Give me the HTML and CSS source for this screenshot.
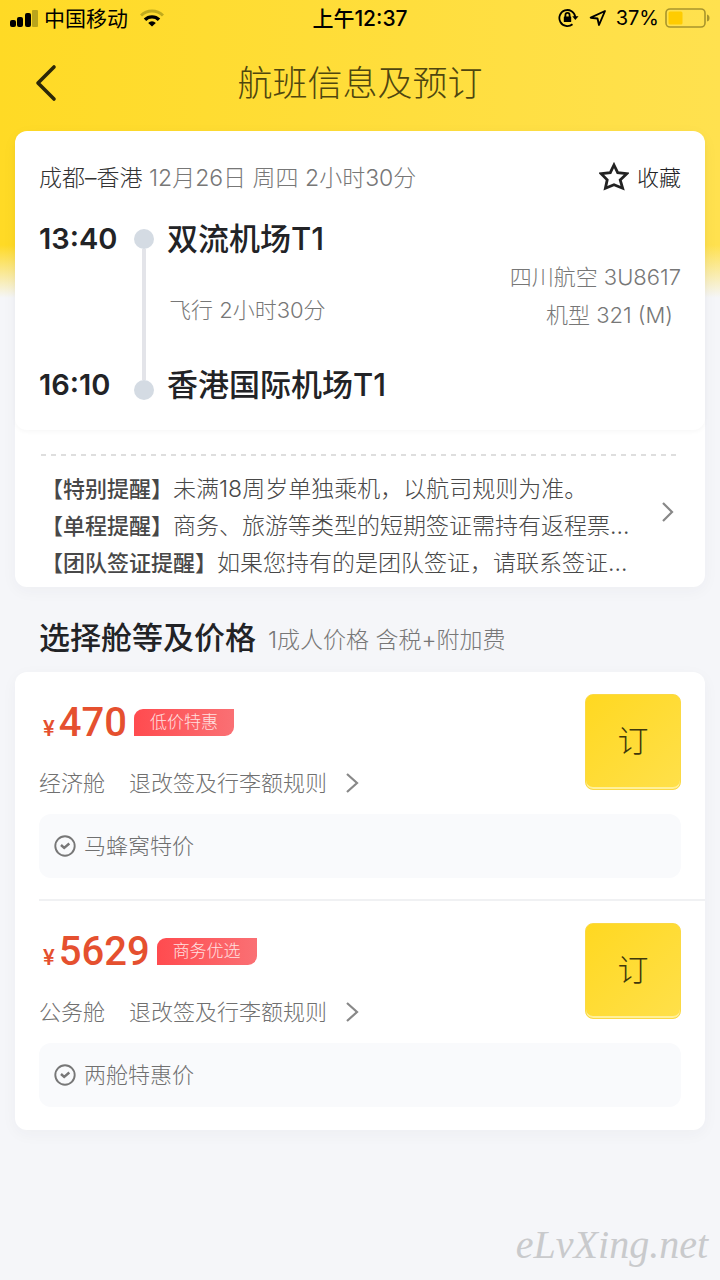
FILE: index.html
```html
<!DOCTYPE html>
<html lang="zh-CN">
<head>
<meta charset="utf-8">
<meta name="viewport" content="width=device-width, initial-scale=1">
<title>航班信息及预订</title>
<link rel="stylesheet" href="styles.css">
</head>
<body>
<div class="page">
  <div class="status">
    <div class="status-left">
      <svg class="signal" width="28" height="18" viewBox="0 0 28 18" aria-hidden="true"><rect x="0" y="11" width="6" height="7" rx="2"/><rect x="7" y="8" width="6" height="10" rx="2"/><rect x="15" y="4" width="6" height="14" rx="2"/><rect x="22" y="1" width="6" height="17" rx="1" fill="#b9a41c"/></svg>
      <span>中国移动</span>
      <svg class="wifi" width="24" height="18" viewBox="0 0 24 18" fill="none" stroke-width="3" aria-hidden="true"><path d="M1 6.500A15.500 15.500 0 0 1 23 6.500" stroke="#c1ab1d"/><path d="M5 10.800A9.800 9.800 0 0 1 19 10.800" stroke="#000" stroke-width="3.400"/><path d="M12 17.500L8.200 13.900A5.400 5.400 0 0 1 15.800 13.900Z" fill="#000"/></svg>
    </div>
    <div class="clock">上午12:37</div>
    <div class="status-right">
      <svg width="21" height="20" viewBox="0 0 21 20" fill="none" stroke="#000" stroke-width="1.800" aria-hidden="true"><path d="M14.500 16.200A8 8 0 1 1 17.300 9"/><path d="M14.300 8.200H20.500L17.300 12Z" fill="#000" stroke="none"/><rect x="5.800" y="8.500" width="7.400" height="5.600" rx=".6" fill="#000" stroke="none"/><path d="M7.400 9V7.200a2.100 2.300 0 0 1 4.200 0V9"/></svg>
      <svg class="locate" width="18" height="18" viewBox="0 0 18 18" fill="none" stroke="#000" stroke-width="1.900" stroke-linejoin="round" aria-hidden="true"><path d="M16 2L1.700 8.700L8.500 9.500L10 16Z"/></svg>
      <span>37%</span>
      <svg class="battery" width="45" height="20" viewBox="0 0 45 20" aria-hidden="true"><rect x="1" y="1" width="39" height="18" rx="4" fill="none" stroke="#a8942c" stroke-width="1.600"/><rect x="3.500" y="3.500" width="14" height="13" rx="1.500" fill="#ffcc00"/><path d="M42 6.500Q44.500 7 44.500 10T42 13.500Z" fill="#a8942c"/></svg>
    </div>
  </div>

  <header class="nav">
    <button class="back" type="button" aria-label="返回"><svg width="22" height="38" viewBox="0 0 22 38" fill="none" stroke="#2b2708" stroke-width="3.600" stroke-linecap="round" stroke-linejoin="round"><path d="M19 3L3 19L19 35"/></svg></button>
    <h1>航班信息及预订</h1>
  </header>

  <main>
    <section class="card flight">
      <div class="trip">
        <div class="trip-head">
          <div class="route"><span class="cities">成都–香港</span> 12月26日 周四 2小时30分</div>
          <button class="favorite" type="button"><svg width="30" height="29" viewBox="0 0 30 29" fill="none" stroke="#222" stroke-width="2.800" stroke-linejoin="miter" aria-hidden="true"><path d="M15 3L18.700 10.700L27.800 11.700L21.200 17.900L23.600 26.200L15 22.700L6.400 26.200L8.200 17.900L2.200 11.700L11.300 10.700Z"/></svg>收藏</button>
        </div>
        <div class="itinerary">
          <div class="times"><time>13:40</time><time>16:10</time></div>
          <div class="rail"><i class="dot"></i><i class="track"></i><i class="dot"></i></div>
          <div class="stops"><strong>双流机场T1</strong><span class="duration">飞行 2小时30分</span><strong>香港国际机场T1</strong></div>
          <div class="plane"><span>四川航空 3U8617</span><span class="model">机型 321 (M)</span></div>
        </div>
      </div>
      <a class="notices" href="#notices">
        <div class="notice-list">
          <p><b>【特别提醒】</b>未满18周岁单独乘机，以航司规则为准。</p>
          <p><b>【单程提醒】</b>商务、旅游等类型的短期签证需持有返程票…</p>
          <p><b>【团队签证提醒】</b>如果您持有的是团队签证，请联系签证…</p>
        </div>
        <svg width="14" height="20" viewBox="0 0 14 20" fill="none" stroke="#888" stroke-width="2.200" aria-hidden="true"><path d="M2 1L11 10L2 19"/></svg>
      </a>
    </section>

    <div class="section-title"><h2>选择舱等及价格</h2><span>1成人价格 含税+附加费</span></div>

    <section class="card">
      <article class="fare">
        <div class="fare-head">
          <div class="fare-info">
            <div class="price-row"><span class="price"><small>¥</small>470</span><span class="tag">低价特惠</span></div>
            <div class="rules"><span>经济舱</span><a href="#rules"><span>退改签及行李额规则</span><svg width="14" height="22" viewBox="0 0 14 22" fill="none" stroke="#888" stroke-width="2.200" aria-hidden="true"><path d="M2 2L12 11L2 20"/></svg></a></div>
          </div>
          <button class="book" type="button">订</button>
        </div>
        <div class="perk"><svg width="22" height="22" viewBox="0 0 22 22" fill="none" stroke="#777" stroke-width="1.900" aria-hidden="true"><circle cx="11" cy="11" r="9.700"/><path d="M7 10L10.200 13L15.300 8.500" stroke-width="2.400"/></svg><span>马蜂窝特价</span></div>
      </article>
      <article class="fare">
        <div class="fare-head">
          <div class="fare-info">
            <div class="price-row"><span class="price"><small>¥</small>5629</span><span class="tag">商务优选</span></div>
            <div class="rules"><span>公务舱</span><a href="#rules"><span>退改签及行李额规则</span><svg width="14" height="22" viewBox="0 0 14 22" fill="none" stroke="#888" stroke-width="2.200" aria-hidden="true"><path d="M2 2L12 11L2 20"/></svg></a></div>
          </div>
          <button class="book" type="button">订</button>
        </div>
        <div class="perk"><svg width="22" height="22" viewBox="0 0 22 22" fill="none" stroke="#777" stroke-width="1.900" aria-hidden="true"><circle cx="11" cy="11" r="9.700"/><path d="M7 10L10.200 13L15.300 8.500" stroke-width="2.400"/></svg><span>两舱特惠价</span></div>
      </article>
    </section>
  </main>
  <div class="watermark">eLvXing.net</div>
</div>
</body>
</html>
```
FILE: styles.css
```css
* { box-sizing: border-box; }
body {
  margin: 0;
  background: #f5f6f9;
  color: #222326;
  font-family: Inter, "Noto Sans CJK SC", sans-serif;
  font-size: 22px;
  font-weight: 300;
}
h1, h2, p { margin: 0; }
svg { display: block; flex: none; }
button {
  border: 0;
  padding: 0;
  background: none;
  color: inherit;
  font: inherit;
  cursor: pointer;
}
a { color: inherit; text-decoration: none; }
.page {
  position: relative;
  min-height: 100vh;
  background:
    linear-gradient(to bottom, rgba(245, 246, 249, 0) 245px, #f5f6f9 298px),
    linear-gradient(to right, #ffda25, #ffe14f);
}

.status {
  display: grid;
  grid-template-columns: 1fr auto 1fr;
  align-items: center;
  height: 36px;
  padding: 0 10px;
  color: #000;
  font-size: 20px;
  font-weight: 400;
}
.status-left, .status-right { display: flex; align-items: center; }
.status-left span { padding-bottom: 2px; font-size: 21px; }
.signal { margin-right: 6px; }
.wifi { margin-left: 12px; }
.status-right { justify-content: flex-end; }
.locate { margin: 0 9px 0 10px; }
.battery { margin-left: 6px; }
.clock { padding-bottom: 2px; font-size: 21px; font-weight: 500; }

.nav {
  display: grid;
  grid-template-columns: 60px 1fr 60px;
  align-items: center;
  height: 95px;
  padding-bottom: 2px;
}
.back { padding-left: 35px; }
.nav h1 {
  padding-bottom: 4px;
  color: #4f460f;
  font-size: 35px;
  font-weight: 300;
  text-align: center;
}

.card {
  margin: 0 15px;
  border-radius: 12px;
  background: #fff;
  box-shadow: 0 4px 16px rgba(40, 50, 80, 0.04);
}
.trip {
  height: 299px;
  padding: 24px 24px 0;
  border-radius: 12px;
  box-shadow: 0 2px 4px rgba(0, 0, 0, 0.03);
}
.trip-head {
  display: flex;
  justify-content: space-between;
  align-items: center;
  height: 44px;
  padding-bottom: 2px;
}
.route { color: #777; font-size: 23px; white-space: nowrap; }
.cities { color: #333; }
.favorite { display: flex; align-items: center; gap: 8px; }
.itinerary { display: flex; height: 206px; padding-top: 20px; }
.times {
  display: flex;
  flex-direction: column;
  justify-content: space-between;
  width: 95px;
  height: 186px;
}
.times time { font-size: 29px; font-weight: 600; line-height: 40px; }
.rail {
  display: flex;
  flex-direction: column;
  align-items: center;
  width: 20px;
  height: 181px;
  padding-top: 10px;
}
.dot { width: 20px; height: 20px; border-radius: 50%; background: #d4dbe3; }
.track { flex: 1; width: 4px; background: #e3e4e9; }
.stops {
  display: flex;
  flex-direction: column;
  justify-content: space-between;
  height: 186px;
  padding-left: 13px;
  line-height: 40px;
  white-space: nowrap;
}
.stops strong { font-size: 31px; font-weight: 500; }
.duration { padding: 0 0 4px 2px; color: #777; }
.plane {
  display: flex;
  flex-direction: column;
  flex: 1;
  padding-top: 39px;
  color: #777;
  line-height: 38px;
  text-align: right;
  white-space: nowrap;
}
.model { padding-right: 8px; }

.notices {
  display: flex;
  justify-content: space-between;
  align-items: flex-start;
  margin: 24px 26px 0;
  padding: 17px 4px 5px 0;
  background: repeating-linear-gradient(to right, #dedede 0 5px, transparent 5px 10px) top / 100% 2px no-repeat;
}
.notices svg { margin-top: 31px; }
.notice-list {
  min-width: 0;
  color: #484848;
  font-size: 23px;
  line-height: 37px;
  white-space: nowrap;
}
.notice-list b { font-size: 22px; font-weight: 500; }

.section-title {
  display: flex;
  align-items: center;
  gap: 12px;
  height: 85px;
  padding: 12px 39px 0;
}
.section-title h2 { font-size: 31px; font-weight: 500; }
.section-title span { padding-top: 5px; color: #777; font-size: 23px; }

.fare { padding: 22px 0 0 24px; }
.fare .perk, .fare .fare-head { margin-right: 24px; }
.fare::after { content: ""; display: block; height: 2px; margin-top: 21px; background: #f0f1f3; }
.fare:last-child::after { background: none; }
.fare-head { display: flex; justify-content: space-between; align-items: flex-start; }
.price-row { display: flex; align-items: center; height: 57px; }
.price {
  color: #e5502f;
  font-family: Roboto, "Noto Sans CJK SC", sans-serif;
  font-size: 40px;
  font-weight: 500;
}
.price small { margin: 0 4px; font-size: 22px; }
.tag {
  margin-left: 7px;
  padding: 0 16px;
  border-radius: 9px 0 9px 0;
  background: linear-gradient(to right, #ff4b4f, #fa7074);
  color: #ffe0e0;
  font-size: 17px;
  line-height: 27px;
}
.rules { display: flex; gap: 24px; height: 63px; align-items: center; color: #707070; }
.rules a { display: flex; align-items: center; gap: 18px; }
.rules span, .perk span { padding-bottom: 4px; }
.book {
  width: 96px;
  height: 96px;
  padding-bottom: 8px;
  border: 1px solid #fbd944;
  border-radius: 8px;
  background: linear-gradient(135deg, #ffd821, #ffe04a);
  box-shadow: inset 0 -2px #fff09a;
  color: #3f380c;
  font-size: 31px;
}
.perk {
  display: flex;
  align-items: center;
  gap: 8px;
  height: 64px;
  padding-left: 15px;
  border-radius: 12px;
  background: #f9fafc;
  color: #707070;
}
.watermark {
  position: absolute;
  right: 12px;
  bottom: 12px;
  color: #c9cacc;
  font-family: "Liberation Serif", serif;
  font-size: 40px;
  font-style: italic;
  font-weight: 400;
}
```
